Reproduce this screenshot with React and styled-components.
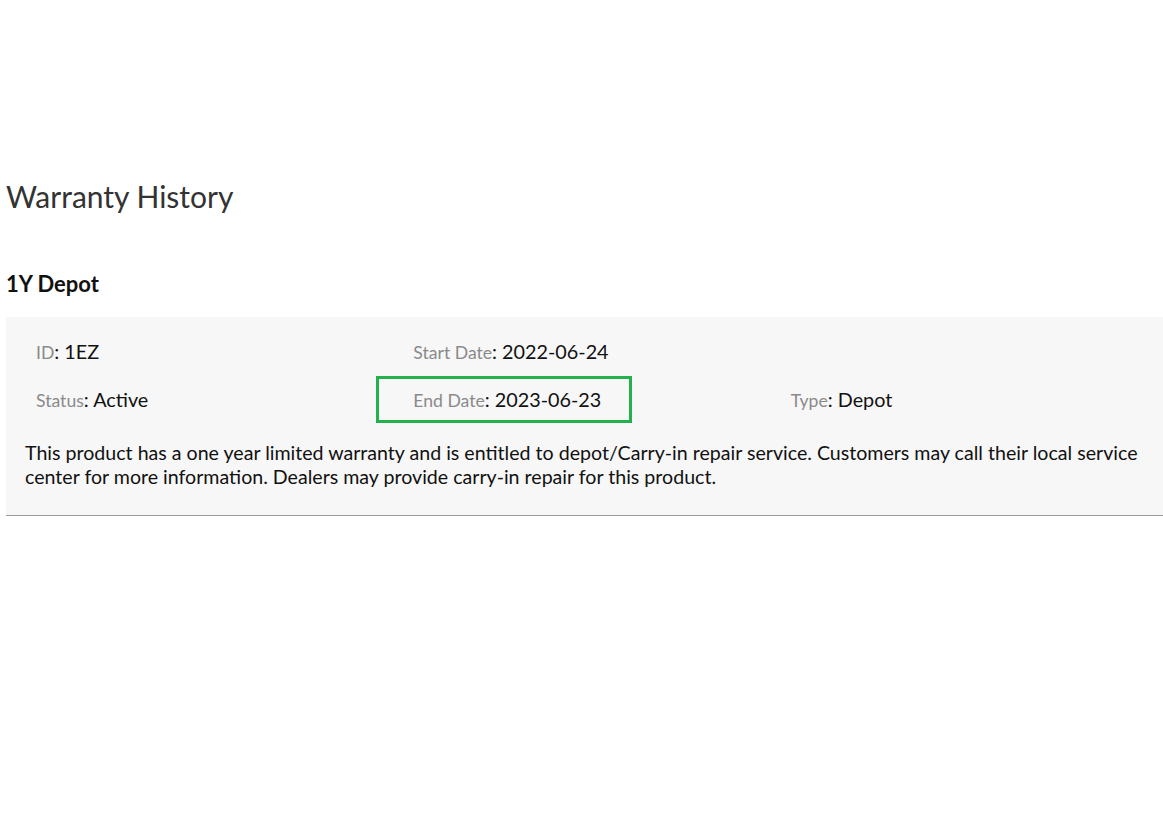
import React from "react";
import styled, { createGlobalStyle } from "styled-components";

const Global = createGlobalStyle`
  html, body { margin: 0; padding: 0; background: #fff; overflow: hidden; }
  body { font-family: Lato, "Open Sans", sans-serif; }
`;

const Page = styled.div`
  width: 1170px;
  padding: 177px 0 0 6px;
`;

const Title = styled.h1`
  margin: 0;
  font-size: 30px;
  font-weight: 400;
  color: #333;
  line-height: 38px;
`;

const Section = styled.section`
  margin-top: 55px;
`;

const SubTitle = styled.h2`
  margin: 0;
  font-size: 22px;
  font-weight: 700;
  color: #111;
  line-height: 28px;
`;

const Panel = styled.div`
  margin-top: 19px;
  background: #f7f7f7;
  border-bottom: 1px solid #9a9a9a;
  padding: 19px 19px 26px 19px;
`;

const Grid = styled.div`
  display: grid;
  grid-template-columns: repeat(3, 1fr);
  row-gap: 16px;
`;

const Cell = styled.div`
  position: relative;
  padding-left: 11px;
  line-height: 31px;
  grid-column: ${(p) => p.$col};
  grid-row: ${(p) => p.$row};
`;

const Label = styled.span`
  font-size: 17.6px;
  color: #8a8a8a;
`;

const Value = styled.span`
  font-size: 19.8px;
  color: #111;
`;

const Highlight = styled.div`
  position: absolute;
  left: -26px;
  top: -8px;
  width: 250px;
  height: 41px;
  border: 3px solid #22b14c;
`;

const Description = styled.p`
  margin: 25px 0 0 0;
  font-size: 19.6px;
  line-height: 24px;
  color: #111;
`;

const Field = ({ label, value, col, row, highlight }) => (
  <Cell $col={col} $row={row}>
    {highlight && <Highlight />}
    <Label>{label}</Label>
    <Value>: {value}</Value>
  </Cell>
);

export default function App() {
  return (
    <>
      <Global />
      <Page>
        <Title>Warranty History</Title>
        <Section>
          <SubTitle>1Y Depot</SubTitle>
          <Panel>
            <Grid>
              <Field label="ID" value="1EZ" col={1} row={1} />
              <Field label="Start Date" value="2022-06-24" col={2} row={1} />
              <Field label="Status" value="Active" col={1} row={2} />
              <Field label="End Date" value="2023-06-23" col={2} row={2} highlight />
              <Field label="Type" value="Depot" col={3} row={2} />
            </Grid>
            <Description>
              This product has a one year limited warranty and is entitled to depot/Carry-in repair
              service. Customers may call their local service center for more information. Dealers
              may provide carry-in repair for this product.
            </Description>
          </Panel>
        </Section>
      </Page>
    </>
  );
}
